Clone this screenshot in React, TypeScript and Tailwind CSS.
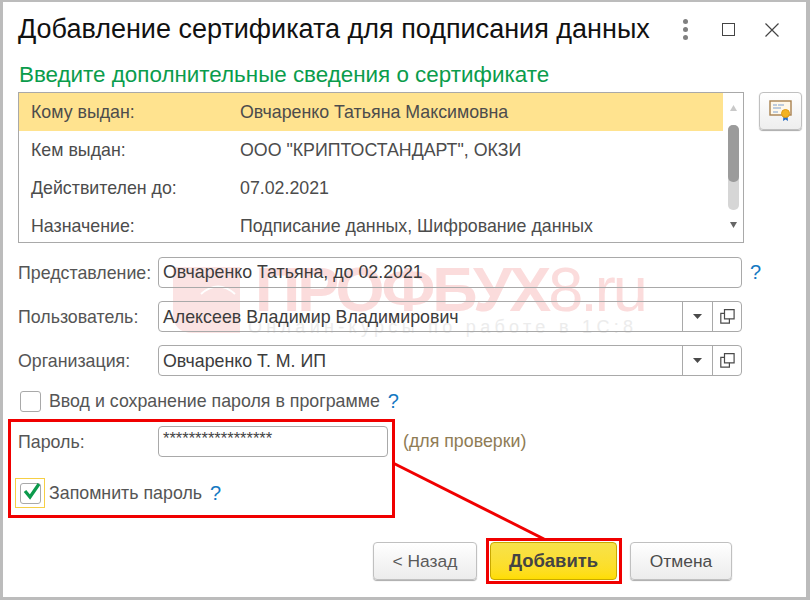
import React from "react";

const font = { fontFamily: '"Liberation Sans", Arial, sans-serif' };

const DropArrow = () => (
  <svg width="9" height="5" viewBox="0 0 9 5">
    <path d="M0 0h9L4.5 5z" fill="#4a4a4a" />
  </svg>
);

const CopyIcon = () => (
  <svg width="15" height="15" viewBox="0 0 15 15" fill="none" stroke="#4a4a4a" strokeWidth="1.2">
    <path d="M4.5 0.6h9.6v9.2h-9.6z" />
    <path d="M4.5 4.4H0.8v9.8h8.6v-4.4" />
  </svg>
);

const Help = () => <span className="text-[20px] leading-none text-[#1478c2]">?</span>;

const Row = ({ label, value }: { label: string; value: string }) => (
  <div className="flex h-[38px] items-center pl-[12px] pt-[2px] text-[17.8px] leading-none text-[#4c4c4c]">
    <div className="w-[209px] shrink-0">{label}</div>
    <div>{value}</div>
  </div>
);

const SelectField = ({ label, value }: { label: string; value: string }) => (
  <div className="flex items-center pl-[15px]">
    <div className="w-[140px] shrink-0 pt-[2px] text-[17.8px] leading-none text-[#555]">{label}</div>
    <div className="flex h-[31px] w-[584px] items-stretch rounded-[4px] border border-[#a9a9a9]">
      <div className="flex-1 pl-[4px] text-[17.8px] leading-[31px] text-[#3c3c3c]">{value}</div>
      <div className="flex w-[30px] items-center justify-center border-l border-[#a9a9a9]">
        <DropArrow />
      </div>
      <div className="flex w-[29px] items-center justify-center border-l border-[#a9a9a9]">
        <CopyIcon />
      </div>
    </div>
  </div>
);

export default function App() {
  return (
    <div className="h-[600px] w-[810px] overflow-hidden bg-[#bcbcbc] pb-[3px] pl-[3px] pr-[3px] pt-[2px]" style={font}>
      <div className="relative h-[595px] w-[803px] bg-white">
        {/* watermark */}
        <div className="absolute left-[170px] top-[265px] flex items-start select-none">
          <svg width="67" height="66" viewBox="0 0 67 66">
            <path d="M0 0h67v66H20Q0 66 0 46z" fill="#fbe3e3" />
            <path d="M28 27Q45 12 62 27" fill="none" stroke="#fff" strokeWidth="2" />
          </svg>
          <div className="ml-[15px] text-[63px] leading-[44px] tracking-[-3px] text-[#fbdcdc]">
            <span className="font-bold">ПРОФБУХ</span>8.ru
          </div>
        </div>
        <div className="absolute left-[245px] top-[312px] select-none text-[18px] tracking-[4.3px] text-[#ececec]">
          Онлайн-курсы по работе в 1С:8
        </div>

        {/* title */}
        <div className="relative flex h-[55px] items-center pl-[15px]">
          <div className="text-[27px] leading-none text-[#111]">Добавление сертификата для подписания данных</div>
          <div className="ml-[33px] flex flex-col gap-[3px]">
            <span className="h-[5px] w-[5px] rounded-full bg-[#808080]" />
            <span className="h-[5px] w-[5px] rounded-full bg-[#808080]" />
            <span className="h-[5px] w-[5px] rounded-full bg-[#808080]" />
          </div>
          <div className="ml-[34px] h-[13px] w-[13px] border-[1.5px] border-[#444]" />
          <svg className="ml-[30px]" width="14" height="14" viewBox="0 0 14 14" stroke="#444" strokeWidth="1.2">
            <path d="M0.5 0.5l13 13M13.5 0.5l-13 13" />
          </svg>
        </div>

        <div className="relative pl-[16px] text-[22.4px] leading-[35px] text-[#0a9c4c]">
          Введите дополнительные сведения о сертификате
        </div>

        {/* details list */}
        <div className="relative flex items-start pl-[15px]">
          <div className="flex h-[151px] w-[726px] border border-[#a9a9a9]">
            <div className="w-[704px]">
              <div className="bg-[#ffe38f]">
                <Row label="Кому выдан:" value="Овчаренко Татьяна Максимовна" />
              </div>
              <Row label="Кем выдан:" value='ООО "КРИПТОСТАНДАРТ", ОКЗИ' />
              <Row label="Действителен до:" value="07.02.2021" />
              <Row label="Назначение:" value="Подписание данных, Шифрование данных" />
            </div>
            <div className="flex flex-1 flex-col items-center pt-[12px]">
              <svg width="7" height="6" viewBox="0 0 7 6">
                <path d="M3.5 0L7 6H0z" fill="#c9c9c9" />
              </svg>
              <div className="mt-[14px] h-[85px] w-[11px] rounded-[5px] bg-[#d6d6d6]">
                <div className="h-[57px] rounded-[5px] bg-[#9b9b9b]" />
              </div>
              <svg className="mt-[12px]" width="7" height="6" viewBox="0 0 7 6">
                <path d="M0 0h7L3.5 6z" fill="#666" />
              </svg>
            </div>
          </div>
          <div className="ml-[15px] flex h-[38px] w-[43px] items-center justify-center rounded-[4px] border border-[#c0c0c0] bg-gradient-to-b from-white to-[#eeeeee] shadow-[0_1px_1px_#aaa]">
            <svg width="24" height="22" viewBox="0 0 24 22">
              <rect x="1" y="1" width="21" height="14" fill="#fff8ea" stroke="#a8814f" strokeWidth="1.4" />
              <path d="M4 5h4M9 5h6M4 8h8M4 12h5" stroke="#7d9fd0" strokeWidth="1" />
              <path d="M14.5 15l-.5 6 2.5-1.5 2.5 1.5-.5-6z" fill="#2b6fc4" />
              <circle cx="16.5" cy="13.5" r="4" fill="#f3b321" stroke="#e09a12" />
            </svg>
          </div>
        </div>

        {/* fields */}
        <div className="relative mt-[14px] flex items-center pl-[15px]">
          <div className="w-[140px] shrink-0 pt-[2px] text-[17.8px] leading-none text-[#555]">Представление:</div>
          <div className="h-[31px] w-[584px] rounded-[4px] border border-[#a9a9a9] pl-[4px] text-[17.8px] leading-[29px] text-[#3c3c3c]">
            Овчаренко Татьяна, до 02.2021
          </div>
          <div className="ml-[8px] flex pb-[2px]">
            <Help />
          </div>
        </div>
        <div className="relative mt-[13px]">
          <SelectField label="Пользователь:" value="Алексеев Владимир Владимирович" />
        </div>
        <div className="relative mt-[13px]">
          <SelectField label="Организация:" value="Овчаренко Т. М. ИП" />
        </div>

        <div className="relative mt-[15px] flex h-[21px] items-center pl-[17px]">
          <div className="h-[21px] w-[21px] rounded-[3px] border border-[#a9a9a9]" />
          <div className="ml-[8px] text-[17.8px] leading-none text-[#555]">Ввод и сохранение пароля в программе</div>
          <div className="ml-[8px] flex pb-[2px]">
            <Help />
          </div>
        </div>

        <div className="relative mt-[14px] flex items-center pl-[15px]">
          <div className="w-[140px] shrink-0 pt-[2px] text-[17.8px] leading-none text-[#555]">Пароль:</div>
          <div className="h-[31px] w-[230px] rounded-[4px] border border-[#a9a9a9] pl-[4px] text-[16.5px] leading-[22px] text-[#444]">
            *****************
          </div>
          <div className="ml-[15px] text-[17.8px] leading-none text-[#8f7c55]">(для проверки)</div>
        </div>

        <div className="relative mt-[21px] flex items-center pl-[12px]">
          <div className="flex h-[30px] w-[30px] items-center justify-center border border-[#f6cf45]">
            <div className="relative h-[21px] w-[21px] rounded-[3px] border border-[#a9a9a9]">
              <svg className="absolute -top-[3px] left-[1px]" width="20" height="20" viewBox="0 0 20 20" fill="none">
                <path d="M3 10l5 6L17 3" stroke="#0c9a4c" strokeWidth="3.2" />
              </svg>
            </div>
          </div>
          <div className="ml-[4px] pt-[2px] text-[17.8px] leading-none text-[#555]">Запомнить пароль</div>
          <div className="ml-[8px] flex">
            <Help />
          </div>
        </div>

        {/* buttons */}
        <div className="relative mt-[34px] flex justify-end pr-[74px] text-[17.4px]">
          <div className="flex h-[38px] w-[104px] items-center justify-center rounded-[4px] border border-[#c0c0c0] bg-gradient-to-b from-white to-[#ececec] text-[#5a5a5a] shadow-[0_1px_1px_#aaa]">
            &lt; Назад
          </div>
          <div className="ml-[13px] flex h-[38px] w-[127px] items-center justify-center rounded-[4px] border border-[#c9a800] bg-gradient-to-b from-[#f7e24a] to-[#ffdd00] font-bold text-[18.4px] text-[#444]">
            Добавить
          </div>
          <div className="ml-[13px] flex h-[38px] w-[102px] items-center justify-center rounded-[4px] border border-[#c0c0c0] bg-gradient-to-b from-white to-[#ececec] text-[#4c4c4c] shadow-[0_1px_1px_#aaa]">
            Отмена
          </div>
        </div>

        {/* red annotations */}
        <div className="absolute left-[5px] top-[417px] h-[99px] w-[387px] border-[3px] border-[#f00000]" />
        <div className="absolute left-[483px] top-[536px] h-[46px] w-[136px] border-[3px] border-[#f00000]" />
        <svg className="absolute left-[388px] top-[458px]" width="160" height="80" viewBox="0 0 160 80">
          <path d="M2 3l151 76" stroke="#f00000" strokeWidth="3" />
        </svg>
      </div>
    </div>
  );
}
